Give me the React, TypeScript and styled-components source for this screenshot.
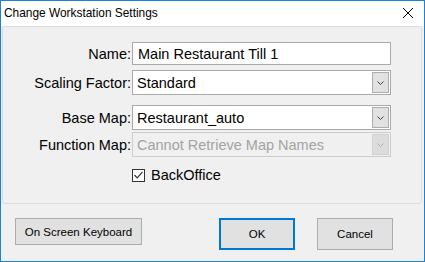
import React from "react";
import styled, { createGlobalStyle } from "styled-components";

const Global = createGlobalStyle`
  html, body { margin: 0; padding: 0; background: #ffffff; }
  * { box-sizing: border-box; }
`;

const Window = styled.div`
  width: 425px;
  height: 262px;
  border: 1px solid #1883d7;
  background: #f0f0f0;
  display: flex;
  flex-direction: column;
  font-family: "Liberation Sans", Arial, sans-serif;
  color: #000;
`;

const TitleBar = styled.div`
  height: 25px;
  background: #ffffff;
  display: flex;
  align-items: center;
  padding-left: 3px;
  font-size: 11.9px;
  flex-shrink: 0;
`;

const TitleText = styled.span`
  flex: 1;
  padding-bottom: 1px;
`;

const CloseBox = styled.div`
  width: 10px;
  height: 10px;
  margin-right: 11px;
  margin-bottom: 1px;
  display: flex;
`;

const Panel = styled.div`
  margin: 0 2px 0 1px;
  height: 178px;
  border: 1px solid #dcdcdc;
  border-radius: 3px;
  padding-top: 15px;
  display: flex;
  flex-direction: column;
`;

const Row = styled.div<{ $mt: number; $h: number }>`
  display: grid;
  grid-template-columns: 129px 259px;
  margin-top: ${(p) => p.$mt}px;
  height: ${(p) => p.$h}px;
  align-items: center;
`;

const Label = styled.label`
  font-size: 14.5px;
  text-align: right;
  padding-right: 1px;
  white-space: nowrap;
`;

const TextField = styled.div`
  height: 100%;
  border: 1px solid #a9a9a9;
  background: #fff;
  font-size: 14.5px;
  padding-left: 5px;
  display: flex;
  align-items: center;
  white-space: nowrap;
`;

const Combo = styled.div<{ $disabled?: boolean }>`
  height: 100%;
  border: 1px solid ${(p) => (p.$disabled ? "#cccccc" : "#a9a9a9")};
  background: ${(p) => (p.$disabled ? "#f0f0f0" : "#fff")};
  color: ${(p) => (p.$disabled ? "#a3a3a3" : "#000")};
  font-size: 14.5px;
  padding: 1px 1px 1px 4px;
  display: flex;
  align-items: center;
  white-space: nowrap;
`;

const ComboText = styled.span`
  flex: 1;
  overflow: hidden;
`;

const DropButton = styled.div<{ $disabled?: boolean }>`
  width: 17px;
  height: 100%;
  border: 1px solid ${(p) => (p.$disabled ? "#d0d0d0" : "#adadad")};
  background: ${(p) => (p.$disabled ? "#dcdcdc" : "#e1e1e1")};
  display: flex;
  align-items: center;
  justify-content: center;
`;

const CheckRow = styled.div`
  grid-column: 2;
  display: flex;
  align-items: center;
  gap: 6px;
  font-size: 14.5px;
`;

const CheckBox = styled.div`
  width: 13px;
  height: 13px;
  border: 1px solid #333;
  background: #fff;
  display: flex;
  align-items: center;
  justify-content: center;
`;

const ButtonBar = styled.div`
  display: flex;
  align-items: flex-start;
  padding: 14px 31px 0 14px;
`;

const ButtonGroup = styled.div`
  margin-left: auto;
  display: flex;
  gap: 22px;
`;

const Button = styled.button<{ $w: number; $h: number; $default?: boolean }>`
  width: ${(p) => p.$w}px;
  height: ${(p) => p.$h}px;
  margin: 0;
  padding: 0;
  background: #e1e1e1;
  border: ${(p) => (p.$default ? "2px solid #0078d7" : "1px solid #adadad")};
  font-family: "Liberation Sans", Arial, sans-serif;
  font-size: 11.5px;
  color: #000;
  display: flex;
  align-items: center;
  justify-content: center;
`;

const Chevron = ({ color }: { color: string }) => (
  <svg width="7" height="4" viewBox="0 0 7 4">
    <path d="M0.5 0.5 L3.5 3.5 L6.5 0.5" fill="none" stroke={color} strokeWidth="1" />
  </svg>
);

export default function App() {
  return (
    <>
      <Global />
      <Window>
        <TitleBar>
          <TitleText>Change Workstation Settings</TitleText>
          <CloseBox>
            <svg width="10" height="10" viewBox="0 0 10 10">
              <path d="M0 0 L10 10 M10 0 L0 10" stroke="#000" strokeWidth="1" />
            </svg>
          </CloseBox>
        </TitleBar>
        <Panel>
          <Row $mt={0} $h={23}>
            <Label>Name:</Label>
            <TextField>Main Restaurant Till 1</TextField>
          </Row>
          <Row $mt={5} $h={25}>
            <Label>Scaling Factor:</Label>
            <Combo>
              <ComboText>Standard</ComboText>
              <DropButton>
                <Chevron color="#404040" />
              </DropButton>
            </Combo>
          </Row>
          <Row $mt={10} $h={25}>
            <Label>Base Map:</Label>
            <Combo>
              <ComboText>Restaurant_auto</ComboText>
              <DropButton>
                <Chevron color="#404040" />
              </DropButton>
            </Combo>
          </Row>
          <Row $mt={2} $h={25}>
            <Label>Function Map:</Label>
            <Combo $disabled>
              <ComboText>Cannot Retrieve Map Names</ComboText>
              <DropButton $disabled>
                <Chevron color="#b0b0b0" />
              </DropButton>
            </Combo>
          </Row>
          <Row $mt={10} $h={13}>
            <CheckRow>
              <CheckBox>
                <svg width="9" height="8" viewBox="0 0 9 8">
                  <path d="M0.5 4 L3.2 6.8 L8.5 0.8" fill="none" stroke="#333" strokeWidth="1.2" />
                </svg>
              </CheckBox>
              <span>BackOffice</span>
            </CheckRow>
          </Row>
        </Panel>
        <ButtonBar>
          <Button $w={127} $h={27}>On Screen Keyboard</Button>
          <ButtonGroup>
            <Button $w={76} $h={32} $default>OK</Button>
            <Button $w={76} $h={32}>Cancel</Button>
          </ButtonGroup>
        </ButtonBar>
      </Window>
    </>
  );
}
